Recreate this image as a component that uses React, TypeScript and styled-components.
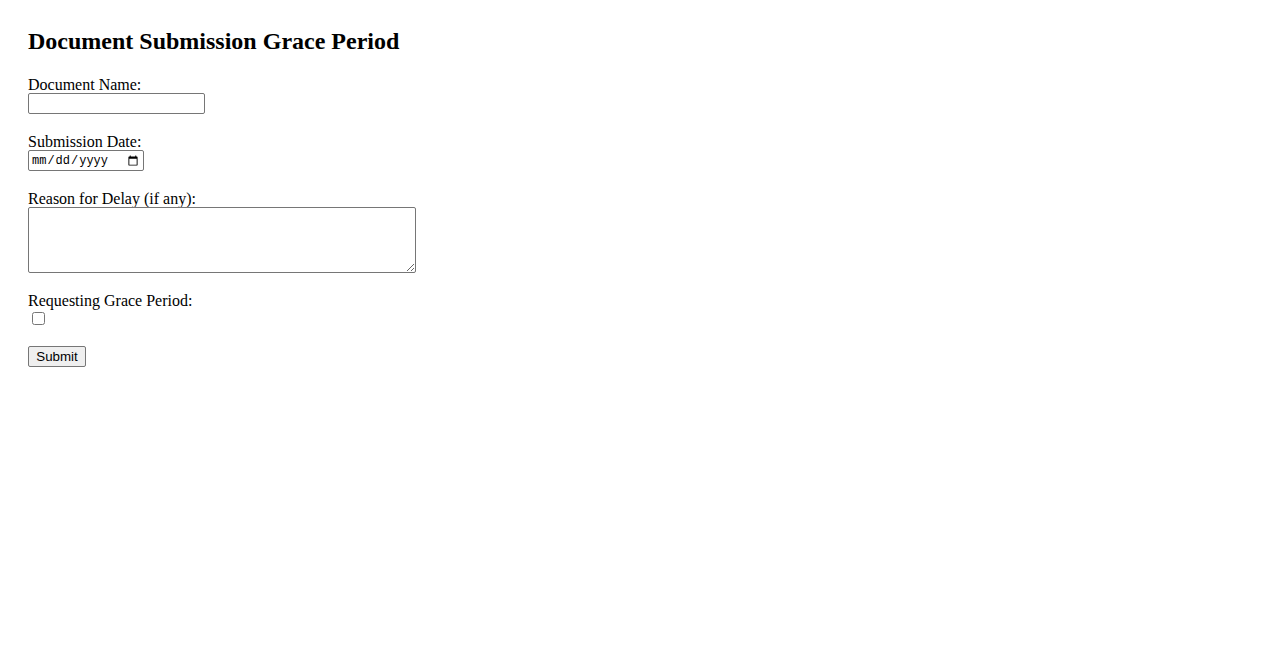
import React, { useState } from "react";
import styled, { createGlobalStyle } from "styled-components";

const GlobalStyle = createGlobalStyle`
  html, body {
    margin: 0;
    padding: 0;
    background: #fff;
  }
  body {
    font-family: "Liberation Serif", "Times New Roman", serif;
    font-size: 16px;
    color: #000;
  }
`;

function App() {
  const [docName, setDocName] = useState("");
  const [date, setDate] = useState("");
  const [reason, setReason] = useState("");
  const [grace, setGrace] = useState(false);

  const handleSubmit = (event: React.FormEvent<HTMLFormElement>) => {
    event.preventDefault();
  };

  return (
    <>
      <GlobalStyle />
      <Page>
        <Title>Document Submission Grace Period</Title>
        <Form onSubmit={handleSubmit}>
          <Field>
            <Label htmlFor="docName">Document Name:</Label>
            <TextInput
              type="text"
              id="docName"
              value={docName}
              onChange={(e) => setDocName(e.target.value)}
            />
          </Field>
          <Field>
            <Label htmlFor="subDate">Submission Date:</Label>
            <DateInput
              type="date"
              id="subDate"
              value={date}
              onChange={(e) => setDate(e.target.value)}
            />
          </Field>
          <Field>
            <Label htmlFor="reason">Reason for Delay (if any):</Label>
            <TextArea
              id="reason"
              value={reason}
              onChange={(e) => setReason(e.target.value)}
            />
          </Field>
          <Field>
            <Label htmlFor="grace">Requesting Grace Period:</Label>
            <Checkbox
              type="checkbox"
              id="grace"
              checked={grace}
              onChange={(e) => setGrace(e.target.checked)}
            />
          </Field>
          <SubmitButton type="submit">Submit</SubmitButton>
        </Form>
      </Page>
    </>
  );
}

const Page = styled.div`
  padding: 27px 28px;
`;

const Title = styled.h2`
  font-size: 24px;
  font-weight: bold;
  margin: 0 0 20px;
  line-height: 28px;
`;

const Form = styled.form`
  display: flex;
  flex-direction: column;
  align-items: flex-start;
`;

const Field = styled.div`
  display: flex;
  flex-direction: column;
  align-items: flex-start;
  margin-bottom: 18px;
`;

const Label = styled.label`
  display: block;
  font-size: 16px;
  line-height: 16px;
  padding-top: 2px;
`;

const TextInput = styled.input`
  box-sizing: border-box;
  width: 177px;
  height: 21px;
  margin: 0;
  padding: 1px 2px;
  border: 1px solid #767676;
  border-radius: 2px;
  font-family: "Liberation Sans", Arial, sans-serif;
  font-size: 13px;
`;

const DateInput = styled.input`
  box-sizing: border-box;
  width: 116px;
  height: 21px;
  margin: 0;
  padding: 1px 2px;
  border: 1px solid #767676;
  border-radius: 2px;
  font-family: "Liberation Mono", "DejaVu Sans Mono", monospace;
  font-size: 12px;
`;

const TextArea = styled.textarea`
  box-sizing: border-box;
  width: 388px;
  height: 66px;
  margin: 0;
  padding: 2px;
  border: 1px solid #767676;
  border-radius: 2px;
  font-family: "Liberation Mono", monospace;
  font-size: 13px;
`;

const Checkbox = styled.input`
  width: 13px;
  height: 13px;
  margin: 3px 3px 3px 4px;
`;

const SubmitButton = styled.button`
  box-sizing: border-box;
  width: 58px;
  height: 21px;
  margin: 0;
  padding: 1px 6px;
  border: 1px solid #767676;
  border-radius: 2px;
  background: #efefef;
  font-family: "Liberation Sans", Arial, sans-serif;
  font-size: 13.33px;
  color: #000;
`;

export default App;
